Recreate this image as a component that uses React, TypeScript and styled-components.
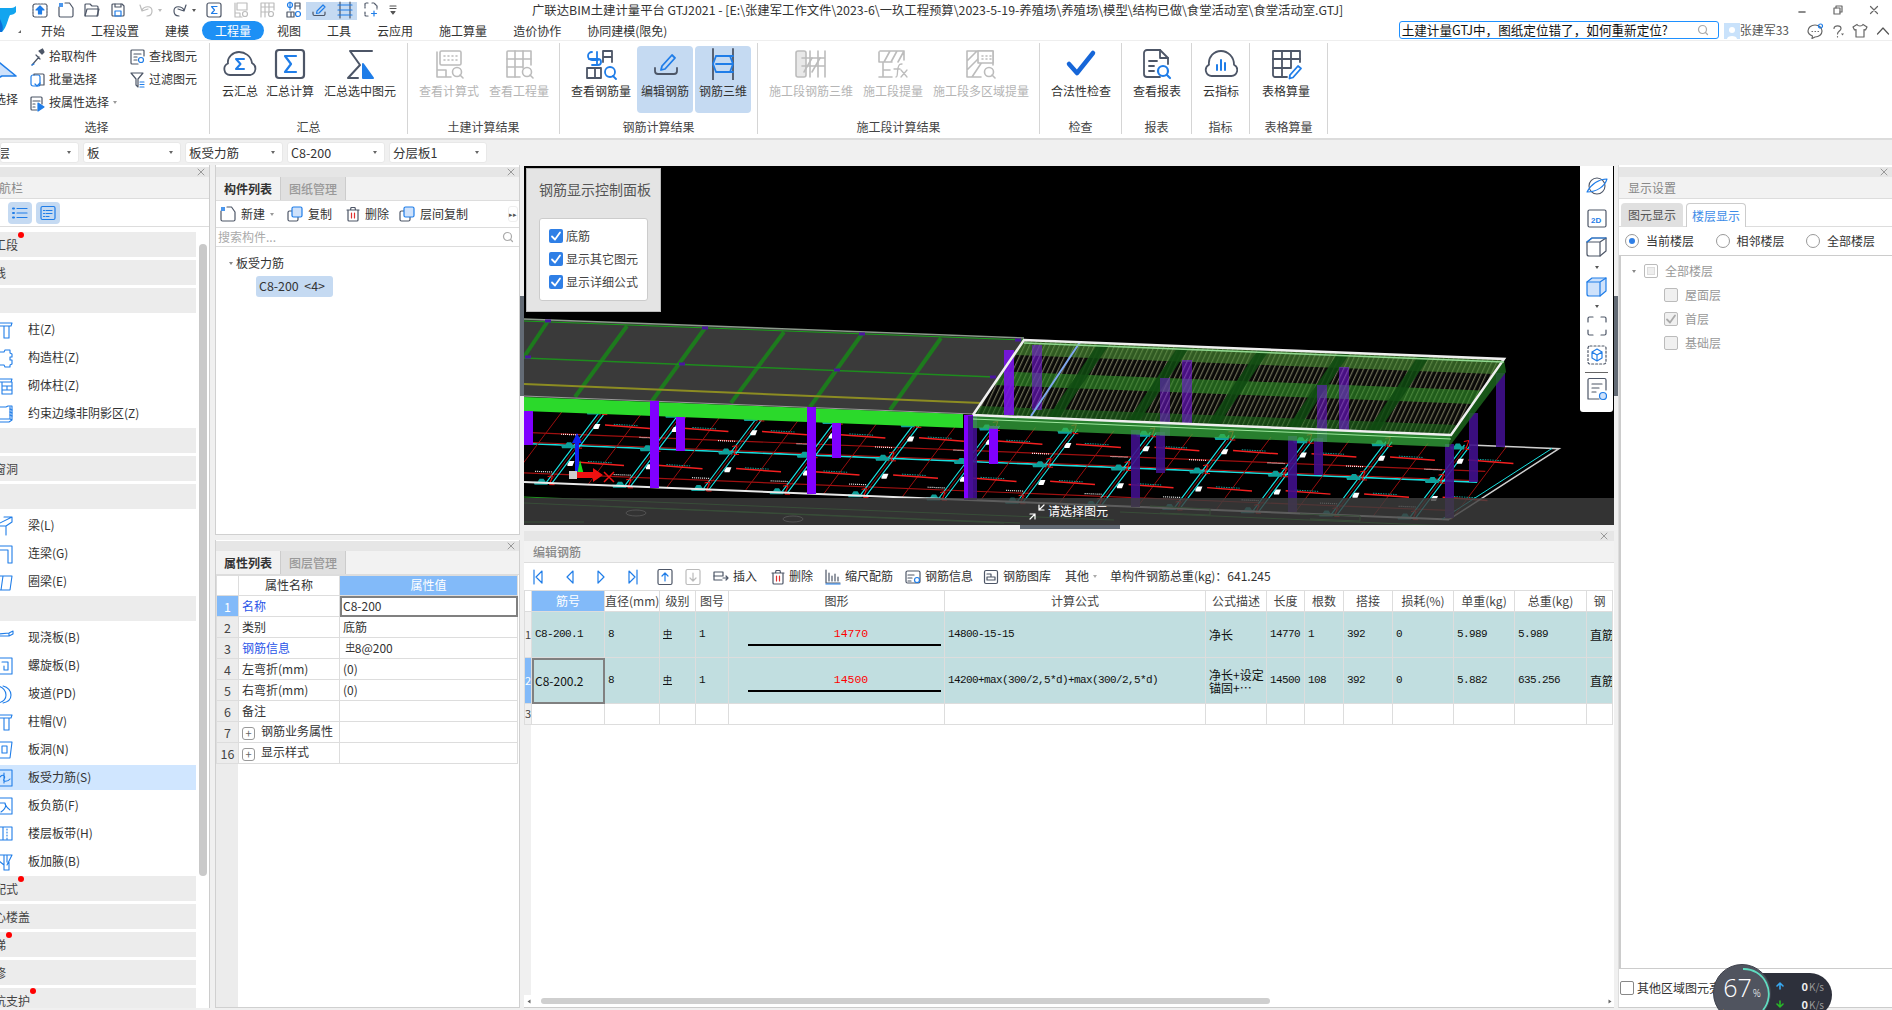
import React from "react";
import styled, { createGlobalStyle } from "styled-components";

const FONT = '"Noto Sans CJK SC", "Noto Sans", sans-serif';
const MONO = '"Liberation Mono", "Noto Sans CJK SC", monospace';
const D = "#4d5667";
const B = "#1f7de8";
const G = "#bcbcbc";

const Global = createGlobalStyle`
  html, body { margin: 0; padding: 0; background: #f0f0f0; overflow: hidden; }
  * { box-sizing: border-box; }
  #root { width: 1892px; height: 1010px; }
`;

const Page = styled.div`
  position: relative; width: 1892px; height: 1010px; overflow: hidden;
  display: flex; flex-direction: column;
  font: 12px/1.2 ${FONT}; color: #333; background: #f0f0f0;
`;

/* ---------- icon helper ---------- */
const Svg = styled.svg`display: block; flex: none;`;
const Ic: React.FC<{ w?: number; h?: number; vb?: string; c?: string; sw?: number; children?: React.ReactNode }> = ({ w = 18, h = 18, vb, c = D, sw = 1.2, children }) => (
  <Svg width={w} height={h} viewBox={vb ?? `0 0 ${w} ${h}`} fill="none" stroke={c} strokeWidth={sw} strokeLinecap="round" strokeLinejoin="round">{children}</Svg>
);

/* ---------- header ---------- */
const Header = styled.header`display: flex; height: 41px; background: #fff; border-bottom: 1px solid #eee;`;
const LogoCell = styled.div`width: 27px; height: 40px; flex: none;`;
const HeaderRows = styled.div`flex: 1; display: flex; flex-direction: column; min-width: 0;`;
const TitleRow = styled.div`height: 20px; display: flex; align-items: center; overflow: hidden;`;
const QuickBtn = styled.div<{ $w?: number; $on?: boolean }>`
  width: ${p => p.$w ?? 26}px; height: 20px; display: flex; align-items: center; justify-content: center; gap: 3px; flex: none;
  background: ${p => (p.$on ? "linear-gradient(#fff 2px,#c5daf2 2px)" : "transparent")};
`;
const Caret = styled.i<{ $c?: string }>`
  display: inline-block; width: 0; height: 0; flex: none;
  border-left: 2.5px solid transparent; border-right: 2.5px solid transparent; border-top: 3px solid ${p => p.$c ?? "#666"};
`;
const TitleText = styled.div`margin-left: 132px; font-size: 12.35px; color: #333; white-space: nowrap;`;
const WinBtns = styled.div`margin-left: auto; display: flex; gap: 0; padding-right: 0;`;
const WinBtn = styled.div`width: 36px; height: 20px; display: flex; align-items: center; justify-content: center;`;
const MenuRow = styled.nav`height: 20px; display: flex; align-items: flex-end; padding-left: 1px;`;
const MenuItem = styled.div<{ $on?: boolean }>`
  height: 19px; padding: 0 13px; line-height: 19px; white-space: nowrap; border-radius: 10px; flex: none;
  color: ${p => (p.$on ? "#fff" : "#333")}; background: ${p => (p.$on ? "#1d90f5" : "transparent")};
`;
const SearchBox = styled.div`
  margin-left: auto; width: 320px; height: 18px; border: 1px solid #1e90ff; border-radius: 3px; background: #fff;
  display: flex; align-items: center; justify-content: space-between; padding: 0 9px 0 2px; margin-bottom: 1px;
  font-size: 12.6px; color: #111; white-space: nowrap; flex: none;
`;
const UserBox = styled.div`display: flex; align-items: center; margin-left: 5px; height: 19px; color: #555; flex: none;`;
const Avatar = styled.div`width: 16px; height: 16px; background: #c9e2fb; display: flex; align-items: flex-end; justify-content: center;`;
const RightIcons = styled.div`display: flex; align-items: center; height: 19px; gap: 8px; margin-left: 18px; padding-right: 0; flex: none; width: 85px;`;

/* ---------- ribbon ---------- */
const Ribbon = styled.section`display: flex; height: 99px; background: #fff; padding: 2px 0 1px; border-bottom: 2px solid #dcdcdc;`;
const Group = styled.div<{ $w: number; $last?: boolean }>`
  width: ${p => p.$w}px; flex: none; display: flex; flex-direction: column;
  border-right: ${p => (p.$last ? "none" : "1px solid #d5d5d5")}; overflow: hidden; margin-bottom: 3px;
`;
const GroupBody = styled.div<{ $pl?: number }>`flex: 1; display: flex; gap: 0; padding: 3px 0 0 ${p => p.$pl ?? 0}px;`;
const GroupLabel = styled.div<{ $pr?: number }>`height: 15px; line-height: 16px; text-align: center; color: #444; padding-right: ${p => p.$pr ?? 0}px;`;
const Big = styled.div<{ $w: number; $on?: boolean; $off?: boolean }>`
  width: ${p => p.$w}px; flex: none; height: 67px; border-radius: 4px; display: flex; flex-direction: column; align-items: center;
  padding-top: 2px; gap: 4px; white-space: nowrap; margin-right: ${p => (p.$on ? 2 : 0)}px;
  background: ${p => (p.$on ? "#c5daf2" : "transparent")}; color: ${p => (p.$off ? "#b5b5b5" : "#333")};
`;
const IconSlot = styled.div`height: 32px; display: flex; align-items: center; justify-content: center;`;
const SelectBig = styled.div`width: 30px; flex: none; overflow: hidden; padding-top: 10px;`;
const SelectBigLabel = styled.div`margin: 8px 0 0 -6px; white-space: nowrap;`;
const SmallCol = styled.div<{ $w: number }>`width: ${p => p.$w}px; flex: none; display: flex; flex-direction: column; gap: 0; margin-top: -1px;`;
const SmallBtn = styled.div`height: 23px; display: flex; align-items: center; gap: 4px; white-space: nowrap;`;

/* ---------- selector row ---------- */
const SelectRow = styled.div`height: 25px; display: flex; gap: 4px; padding-top: 2px; background: #f0f0f0; flex: none;`;
const Select = styled.div<{ $first?: boolean }>`
  width: ${p => (p.$first ? 79 : 98)}px; height: 21px; background: #fff; border: 1px solid #e8e8e8; border-radius: 3px;
  display: flex; align-items: center; justify-content: space-between; padding: 0 7px 0 3px; font-size: 12.5px; overflow: hidden; flex: none;
`;
const SelectText = styled.span<{ $cut?: boolean }>`margin-left: ${p => (p.$cut ? -19 : 0)}px; white-space: nowrap;`;

/* ---------- panels ---------- */
const Main = styled.main`flex: 1; display: flex; min-height: 0; padding-bottom: 2px;`;
const Cap = styled.div<{ $top?: number }>`
  height: 10px; background: #e6e6e6; display: flex; align-items: center; justify-content: flex-end; padding-right: 4px; flex: none;
  margin-top: ${p => p.$top ?? 2}px;
`;
const CapTitle = styled.div`height: 22px; line-height: 22px; background: #f2f2f2; border-bottom: 1px solid #ddd; color: #888; flex: none; padding-left: 9px; white-space: nowrap; overflow: hidden;`;
const X: React.FC = () => (
  <Ic w={8} h={8} c="#999" sw={1}><path d="M1 1l6 6M7 1L1 7" /></Ic>
);

const LeftPanel = styled.aside`width: 210px; flex: none; display: flex; flex-direction: column; background: #fff; border-right: 1px solid #ccc; overflow: hidden;`;
const CutTitle = styled(CapTitle)`padding-left: 0; text-indent: -13px;`;
const NavTools = styled.div`height: 28px; display: flex; gap: 4px; padding: 3px 0 0 8px; border-bottom: 1px solid #ddd; flex: none;`;
const ToolToggle = styled.div`width: 24px; height: 22px; background: #c5daf2; border-radius: 4px; display: flex; align-items: center; justify-content: center;`;
const NavBody = styled.div`flex: 1; display: flex; min-height: 0; padding-top: 4px;`;
const NavList = styled.div`width: 196px; flex: none; overflow: hidden; display: flex; flex-direction: column;`;
const NavGroupRow = styled.div`
  height: 25px; margin: 1px 0 2px; background: #ececec; line-height: 26px; white-space: nowrap; padding-left: 0; flex: none;
  display: flex; color: #444;
`;
const NavGroupText = styled.span`margin-left: -18px; position: relative;`;
const RedDot = styled.i`position: absolute; right: -6px; top: 0; width: 6px; height: 6px; border-radius: 50%; background: #f00;`;
const NavItem = styled.div<{ $on?: boolean }>`
  height: 25px; margin: 2px 0 1px; display: flex; align-items: center; white-space: nowrap; gap: 14px; flex: none;
  background: ${p => (p.$on ? "#d0e6ff" : "transparent")};
`;
const ScrollTrack = styled.div`width: 8px; margin-left: 3px; padding-top: 13px; flex: none;`;
const ScrollThumb = styled.div`height: 632px; background: #c9c9c9; border-radius: 4px;`;

const MiddleCol = styled.div`width: 305px; margin-left: 5px; flex: none; display: flex; flex-direction: column; gap: 5px;`;
const SidePanel = styled.section<{ $h?: number }>`
  flex: ${p => (p.$h ? `0 0 ${p.$h}px` : "1")}; min-height: 0; display: flex; flex-direction: column; background: #fff;
  border: 1px solid #d0d0d0; border-top: none; overflow: hidden;
`;
const TabBar = styled.div`height: 24px; display: flex; background: #f2f2f2; border-bottom: 1px solid #ddd; flex: none;`;
const Tab = styled.div<{ $on?: boolean }>`
  width: 65px; text-align: center; line-height: 23px; font-weight: ${p => (p.$on ? 600 : 500)};
  background: ${p => (p.$on ? "#f2f2f2" : "#e0e0e0")}; color: ${p => (p.$on ? "#333" : "#999")};
  border-right: 1px solid #ccc;
`;
const PanelTools = styled.div`height: 27px; display: flex; align-items: center; border-bottom: 1px solid #ddd; flex: none; position: relative; padding-left: 4px; white-space: nowrap;`;
const ToolBtn = styled.div<{ $mr?: number }>`display: flex; align-items: center; gap: 5px; margin-right: ${p => p.$mr ?? 10}px; flex: none;`;
const MoreBtn = styled.div`margin-left: auto; width: 10px; height: 16px; margin-right: 1px; border-radius: 3px; background: #fff; border: 1px solid #eee; font-size: 7px; color: #555; text-align: center; line-height: 14px;`;
const SearchRow = styled.div`height: 19px; display: flex; align-items: center; justify-content: space-between; padding: 0 5px 0 2px; border-bottom: 1px solid #ddd; color: #aaa; flex: none;`;
const Tree = styled.div`padding: 8px 0 0 13px;`;
const TreeRoot = styled.div`display: flex; align-items: center; gap: 3px; height: 16px;`;
const TreeChip = styled.div`margin: 5px 0 0 27px; width: 77px; height: 21px; background: #c5daf2; border-radius: 3px; padding-left: 3px; line-height: 21px; white-space: nowrap; font-size: 12.4px;`;

const PropTable = styled.table`border-collapse: collapse; table-layout: fixed; width: 301px;`;
const PropArea = styled.div`flex: 1; background: linear-gradient(to right,#ececec 22px,#fff 22px); min-height: 0; overflow: hidden;`;
const PropHead = styled.th<{ $on?: boolean }>`
  height: 20px; font-weight: 400; font-size: 12px; padding: 0;
  border: 1px solid #ddd; background: ${p => (p.$on ? "#82baf9" : "#fff")}; color: ${p => (p.$on ? "#fff" : "#333")};
`;
const PropNo = styled.td<{ $on?: boolean }>`
  height: 21px; padding: 0; text-align: center; font-size: 12.5px; border: 1px solid #ddd;
  background: ${p => (p.$on ? "#82baf9" : "#ececec")}; color: ${p => (p.$on ? "#fff" : "#444")};
`;
const PropCell = styled.td<{ $link?: boolean; $edit?: boolean }>`
  height: 21px; padding: 0 3px; border: 1px solid #ddd; white-space: nowrap; overflow: hidden;
  color: ${p => (p.$link ? "#2a55e8" : "#333")};
  outline: ${p => (p.$edit ? "2px solid #808080" : "none")}; outline-offset: -2px;
`;
const Expand = styled.span`
  display: inline-flex; width: 13px; height: 13px; border: 1px solid #999; border-radius: 3px; margin-right: 6px;
  align-items: center; justify-content: center; font-size: 11px; line-height: 1; vertical-align: -2px; color: #666;
`;
const GradeMark = styled.span`font-size: 9px; font-family: "Liberation Serif", "Noto Sans CJK SC", serif; text-decoration: underline; vertical-align: 3px;`;

/* ---------- centre ---------- */
const CenterCol = styled.div`width: 1098px; flex: none; display: flex; flex-direction: column; gap: 2px; padding-top: 1px;`;
const ViewRow = styled.div`height: 363px; display: flex; flex: none;`;
const Strip = styled.div`width: 4px; flex: none; padding-top: 130px;`;
const StripHandle = styled.div`height: 100px; background: #636b75;`;
const Viewport = styled.div`position: relative; flex: 1; background: #000; overflow: hidden;`;
const ControlPanel = styled.div`
  position: absolute; left: 2px; top: 2px; width: 135px; height: 144px; background: #e4e4e4; border: 1px solid #bbb; padding: 11px 12px 0 12px;
`;
const ControlTitle = styled.div`font-size: 14px; color: #555; white-space: nowrap; line-height: 18px;`;
const ControlBox = styled.div`
  margin-top: 20px; background: #fff; border: 1px solid #ccc; border-radius: 3px; height: 83px; padding: 10px 0 0 9px;
  display: flex; flex-direction: column; gap: 9px;
`;
const ControlRow = styled.div`display: flex; align-items: center; gap: 3px; height: 14px; white-space: nowrap; color: #444;`;
const BlueCheck = styled.span`width: 14px; height: 14px; background: #2f7fe6; border-radius: 2px; display: flex; align-items: center; justify-content: center;`;
const StatusBar = styled.div`
  position: absolute; left: 0; right: 0; bottom: 4px; height: 27px; background: rgba(62,62,62,.82);
  display: flex; align-items: center; color: #fff; padding-left: 505px; gap: 3px;
`;
const BottomHandle = styled.div`position: absolute; left: 496px; width: 100px; bottom: 0; height: 4px; background: #636b75;`;
const BottomWhite = styled.div`position: absolute; left: 0; right: 0; bottom: 0; height: 4px; background: #f0f0f0;`;
const ViewTools = styled.div`
  position: absolute; right: 1px; top: 0; width: 33px; height: 246px; background: #fff; border-radius: 0 0 3px 3px;
  display: flex; flex-direction: column; align-items: center; padding-top: 10px;
`;
const ViewToolGap = styled.div<{ $h: number }>`height: ${p => p.$h}px; flex: none;`;
const ViewToolLine = styled.div`width: 23px; height: 1px; background: #666; flex: none; margin: 7px 0 4px;`;

const EditPanel = styled.section`flex: 1; margin: 0 4px; min-height: 0; display: flex; flex-direction: column; background: #fff; overflow: hidden; border-bottom: 1px solid #ccc;`;
const EditCap = styled(Cap)`padding-right: 6px;`;
const EditTitle = styled(CapTitle)`font-weight: 500; height: 22px;`;
const EditTools = styled.div`height: 27px; display: flex; align-items: center; white-space: nowrap; flex: none;`;
const NavArrows = styled.div`display: flex; align-items: center; padding-left: 8px; width: 133px; flex: none; gap: 0;`;
const ArrowCell = styled.div`width: 31.7px; flex: none;`;
const BoxBtn = styled.div<{ $w?: number }>`width: ${p => p.$w ?? 28}px; flex: none;`;
const EditTool = styled.div<{ $w: number }>`width: ${p => p.$w}px; display: flex; align-items: center; gap: 4px; flex: none;`;
const GridArea = styled.div`flex: 1; min-height: 0; background: linear-gradient(to right,#f0f0f0 7px,#fff 7px); overflow: hidden;`;
const Grid = styled.table`border-collapse: collapse; table-layout: fixed; width: 1088px;`;
const GH = styled.th<{ $on?: boolean }>`
  height: 21px; padding: 0; font-weight: 400; border: 1px solid #ddd; border-top: 1px solid #ddd; white-space: nowrap; overflow: hidden;
  background: ${p => (p.$on ? "#82baf9" : "#fff")}; color: ${p => (p.$on ? "#fff" : "#444")}; font-size: 12px;
`;
const GNo = styled.td<{ $on?: boolean }>`
  padding: 0; font-size: 11px; text-align: center; border: 1px solid #ddd; overflow: hidden;
  background: ${p => (p.$on ? "#82baf9" : "#f0f0f0")}; color: ${p => (p.$on ? "#fff" : "#444")};
`;
const GC = styled.td<{ $row?: boolean; $mono?: boolean; $h?: number; $sel?: boolean }>`
  height: ${p => p.$h ?? 46}px; padding: 0 2px 0 3px; border: 1px solid #ddd; white-space: nowrap; overflow: hidden;
  background: ${p => (p.$row ? "#c1dee0" : "#fff")}; color: #111; line-height: 13px;
  font-family: ${p => (p.$mono ? MONO : FONT)}; font-size: ${p => (p.$mono ? "11px" : "12px")}; letter-spacing: ${p => (p.$mono ? "-0.6px" : "0")};
  outline: ${p => (p.$sel ? "2px solid #808080" : "none")}; outline-offset: -2px;
`;
const ShapeCell = styled.div`display: flex; flex-direction: column; align-items: center; margin-top: 5px; padding-left: 14px;`;
const ShapeNum = styled.span`color: #f00; font: 11.5px/12px ${MONO}; margin-left: 14px;`;
const ShapeLine = styled.i`display: block; width: 193px; height: 2px; background: #000; margin-top: 4px;`;
const HBar = styled.div`height: 12px; display: flex; align-items: center; padding: 0 2px 0 3px; gap: 2px; flex: none;`;
const HTrack = styled.div`flex: 1; height: 6px;`;
const HThumb = styled.div`width: 729px; height: 6px; margin-left: 8px; background: #cfcfcf; border-radius: 3px;`;
const ArrowLeft = styled(Caret)`transform: rotate(90deg);`;
const ArrowRight = styled(Caret)`transform: rotate(-90deg);`;

/* ---------- right panel ---------- */
const RightPanel = styled.aside`flex: 1; min-width: 0; display: flex; flex-direction: column; background: #fff; border-bottom: 1px solid #ccc; border-left: 1px solid #ddd; overflow: hidden;`;
const DisplayTabs = styled.div`height: 28px; display: flex; gap: 3px; padding: 4px 0 0 2px; border-bottom: 1px solid #ddd; flex: none;`;
const DTab = styled.div<{ $on?: boolean }>`
  width: ${p => (p.$on ? 60 : 62)}px; height: 24px; border-radius: 4px 4px 0 0; text-align: center; line-height: 24px;
  background: ${p => (p.$on ? "#fff" : "#e0e0e0")}; color: ${p => (p.$on ? "#3d8ce8" : "#555")};
  border: ${p => (p.$on ? "1px solid #ccc" : "none")}; border-bottom: none; font-size: 12px;
`;
const RadioRow = styled.div`height: 29px; display: flex; align-items: center; padding-left: 6px; flex: none; border-bottom: 1px solid #ccc;`;
const RadioItem = styled.div`width: 90.5px; display: flex; align-items: center; gap: 7px; flex: none; white-space: nowrap;`;
const Radio = styled.span`
  width: 14px; height: 14px; border: 1px solid #999; border-radius: 50%; background: #fff; display: flex; align-items: center; justify-content: center;
`;
const RadioDot = styled.i`width: 6px; height: 6px; background: #2f7fe6; border-radius: 50%;`;
const FloorBox = styled.div`flex: 1; border-left: 2px solid #ccc; border-bottom: 1px solid #ccc; padding: 3px 0 0 8px; color: #999; min-height: 0;`;
const FloorRow = styled.div<{ $indent?: boolean }>`height: 24px; display: flex; align-items: center; gap: 7px; padding-left: ${p => (p.$indent ? 35 : 0)}px; white-space: nowrap;`;
const FloorCheck = styled.span<{ $partial?: boolean }>`
  width: 14px; height: 14px; border: 1px solid #bbb; border-radius: 2px; background: ${p => (p.$partial ? "#fff" : "#f0f0f0")};
  display: flex; align-items: center; justify-content: center; flex: none;
`;
const FloorInner = styled.i`width: 8px; height: 8px; background: #eee; border: 1px solid #ddd;`;
const TreeCaret = styled.span`margin: 0 1px 0 3px; display: flex;`;
const FootRow = styled.div`height: 38px; display: flex; align-items: center; gap: 3px; padding: 0 0 0 1px; flex: none; white-space: nowrap;`;
const PlainCheck = styled.span`width: 14px; height: 14px; border: 1px solid #888; border-radius: 2px; background: #fff; flex: none;`;

/* ---------- net widget ---------- */
const Net = styled.div`position: absolute; left: 1713px; top: 963px; width: 119px; height: 60px;`;
const NetPill = styled.div`
  position: absolute; left: 28px; top: 10px; right: 0; height: 44px; border-radius: 22px; background: #2d303b; color: #ddd;
  display: flex; flex-direction: column; justify-content: center; gap: 4px; padding: 0 8px 0 35px; font-size: 10px;
`;
const NetRow = styled.div`display: flex; align-items: center; justify-content: space-between; height: 14px; line-height: 14px;`;
const NetVal = styled.span`color: #999; b { color: #eee; font-size: 11px; font-weight: 600; margin-right: 1px; }`;
const NetCircle = styled.div`
  position: absolute; left: 0; top: 1px; width: 58px; height: 58px; border-radius: 50%; background: #50545f; border: 1px solid #3f424d;
  display: flex; align-items: center; justify-content: center; color: #fff; font: 300 25px/1 "Open Sans", "Noto Sans", sans-serif; padding-bottom: 12px;
`;
const NetPct = styled.span`font-size: 10px; margin: 11px 0 0 1px;`;
const NetRing = styled.svg`position: absolute; left: -1px; top: -1px;`;

/* ---------- icons ---------- */
const CopyGlyph: React.FC = () => (
  <Ic w={16} h={16} c={D}>
    <path d="M5 5H2.5A1.5 1.5 0 0 0 1 6.500v7A1.500 1.500 0 0 0 2.500 15h7A1.500 1.500 0 0 0 11 13.500V11" />
    <rect x="5" y="1" width="10" height="10" rx="1.500" fill="#cfe2fb" stroke={B} />
  </Ic>
);
const NewDoc = () => (
  <Ic w={16} h={16}>
    <path d="M1 5v8.500A1.500 1.500 0 0 0 2.500 15h11a1.500 1.500 0 0 0 1.500-1.500V6l-3.500-5H7" />
    <rect x="1" y="1" width="4" height="4" fill={B} stroke="none" opacity=".8" />
  </Ic>
);
const Trash = () => (
  <Ic w={14} h={16}>
    <path d="M1 4h12M4.500 4l.5-2.500h4L9.500 4M2 4v10a1 1 0 0 0 1 1h8a1 1 0 0 0 1-1V4" />
    <path d="M5.500 7v5M8.500 7v5" stroke="#e03030" />
  </Ic>
);
const Mag: React.FC<{ c?: string; s?: number }> = ({ c = "#aaa", s = 12 }) => (
  <Ic w={s} h={s} vb="0 0 12 12" c={c}><circle cx="5.500" cy="5.500" r="4" /><path d="M8.500 8.500l2 2" /></Ic>
);

const CloudSigma = () => (
  <Ic w={36} h={32} sw={1.800}>
    <path d="M8 27a6 6 0 0 1-2-11.500C5 9 11 4 17 4s12 4 13 11a6.500 6.500 0 0 1-1.500 12Z" />
    <path d="M22 11h-8l4.500 5-4.500 5h8" stroke={B} strokeWidth={2} />
  </Ic>
);
const BoxSigma = () => (
  <Ic w={32} h={32} sw={2.200}>
    <rect x="2" y="2" width="28" height="28" rx="3" />
    <path d="M22 8H11l6 8-6 8h11" stroke={B} strokeWidth={2.200} />
  </Ic>
);
const SelSigma = () => (
  <Ic w={32} h={32} sw={2}>
    <path d="M28 3H6l10 14L4 30h10" />
    <path d="M19 16l10 14H19Z" fill={B} stroke={B} />
  </Ic>
);
const GrayCalc = () => (
  <Ic w={34} h={32} c={G} sw={1.600}>
    <path d="M5 4v25h14M5 22h9v7" />
    <rect x="8" y="3" width="21" height="14" rx="1.500" />
    <path d="M12 8h1M16 8h1M20 8h1M24 8h1M12 12h1M16 12h1M20 12h1M24 12h1" />
    <circle cx="25" cy="24" r="4.500" /><path d="M28 27l3 3" />
  </Ic>
);
const GrayTable = () => (
  <Ic w={34} h={32} c={G} sw={1.600}>
    <path d="M18 29H5V4a1 1 0 0 1 1-1h23v14" />
    <path d="M5 11h24M5 19h16M13 3v26M21 3v17" />
    <circle cx="25" cy="24" r="4.500" /><path d="M28 27l3 3" />
  </Ic>
);
const RebarQty = () => (
  <Ic w={34} h={32} sw={1.800}>
    <path d="M8 4a4 4 0 1 0 0 8h6M13 4v12" stroke={B} /><path d="M5 11h9a3 3 0 0 1 0 6H8" stroke={B} />
    <path d="M19 14V3h9v11M19 9h9" />
    <path d="M3 30V20h14v10H3M11 20v10" />
    <circle cx="26" cy="24" r="5" stroke={B} /><path d="M29 28l3 3" stroke={B} />
  </Ic>
);
const EditRebar = () => (
  <Ic w={30} h={30} sw={1.800}>
    <path d="M5 19v3a3 3 0 0 0 3 3h16a3 3 0 0 0 3-3v-3" />
    <path d="M12 17l10-11 3 3-10 11-4 1Z" stroke={B} />
  </Ic>
);
const Rebar3D = () => (
  <Ic w={30} h={32} sw={1.800}>
    <path d="M5 1v31M25 1v31" />
    <path d="M8 8h17M8 16h17M8 24h17M8 8L5 16l3 8M22 8l3 8-3 8" stroke={B} />
  </Ic>
);
const GrayRebar3D = () => (
  <Ic w={34} h={32} c={G} sw={1.600}>
    <rect x="2" y="3" width="10" height="26" rx="2" fill="#e8e8e8" />
    <path d="M8 10h23M8 18h23M16 3v26M24 3v26M31 3v26" />
    <path d="M10 24l8-14M18 24l8-14" />
  </Ic>
);
const GrayFx = () => (
  <Ic w={34} h={32} c={G} sw={1.600}>
    <path d="M4 3h24v9M3 14V4M8 14L14 3M15 14l6-11M22 14l6-11M4 14h12M7 14v15M7 22h7M3 29h13" />
    <path d="M20 29c2 0 1-5 2-9s2-4 4-4M18 21h6M25 22l6 7M31 22l-6 7" strokeWidth={1.300} />
  </Ic>
);
const GrayMulti = () => (
  <Ic w={34} h={32} c={G} sw={1.600}>
    <path d="M3 29V3h26v14M3 13L13 3M3 22L19 6M8 29l10-15M3 29h14" />
    <rect x="14" y="3" width="15" height="12" fill="#fff" />
    <path d="M18 8h1M22 8h1M26 8h1M18 11h1M22 11h1M26 11h1" />
    <circle cx="25" cy="24" r="4.500" /><path d="M28 27l3 3" />
  </Ic>
);
const CheckBig = () => (
  <Ic w={32} h={32} c="#1666d8" sw={4.500}><path d="M4 16l8 9L28 5" /></Ic>
);
const Report = () => (
  <Ic w={34} h={32} sw={1.800}>
    <path d="M20 29H7a3 3 0 0 1-3-3V5a3 3 0 0 1 3-3h13l8 8v6" /><path d="M20 2v8h8" />
    <path d="M9 13h8M9 18h5M9 23h5" />
    <circle cx="23" cy="23" r="5" stroke={B} strokeWidth={2.200} /><path d="M27 27l3 3" stroke={B} strokeWidth={2.200} />
  </Ic>
);
const CloudIdx = () => (
  <Ic w={34} h={32} sw={1.800}>
    <path d="M8 28a6 6 0 0 1-3-11.300C4 9 10 3 17 3s13 6 13 13.700A6 6 0 0 1 27 28Z" />
    <path d="M13 17v5M17 12v10M21 15v7" stroke={B} strokeWidth={2} />
  </Ic>
);
const TableEdit = () => (
  <Ic w={34} h={32} sw={1.800}>
    <path d="M18 29H6a2 2 0 0 1-2-2V3h27v11" /><path d="M4 11h27M4 20h17M13 3v26M22 3v17" />
    <path d="M21 27l8-9 3 2.500-8 9-3.500 1Z" stroke={B} />
  </Ic>
);

const Cube: React.FC<{ filled?: boolean }> = ({ filled }) => (
  <Ic w={21} h={21} c={filled ? B : D} sw={1.200}>
    <path d="M1 6v12a2 2 0 0 0 2 2h11l6-5V2H6Z" fill={filled ? "#cfe2fb" : "none"} stroke={filled ? B : D} />
    <path d="M1 6h13v14M14 6l6-4" />
    {!filled && <path d="M1 6l5-4h14" stroke={B} />}
  </Ic>
);

/* ---------- nav icons: their left part is scrolled out of the panel ---------- */
const navIcons: Record<string, React.ReactNode> = {
  col: <path d="M-2 3h14M12 3l-1 3H-2M4 6v12h5V6" />,
  gz: <path d="M0 4h4l1-2h5v3l2 1v3h-2v3h2v4l-2 1v2H5l-1-2H0" />,
  qt: <path d="M-2 3h14M12 3l-1 3H-2M2 6v12h10V6M2 10h10M2 14h10M7 10v4" />,
  yb: <><path d="M-1 3h7l2-1h4v14l-3 2H-1M-1 15h11v-12M10 15l2 1" /><path d="M10 5l2 1M10 8l2 1M10 11l2 1" /></>,
  beam: <path d="M-2 8L12 1v5L6 10v9M6 10H-2M12 1H4" />,
  lian: <path d="M-2 2h14v17h-4V6H-2" />,
  quan: <path d="M-1 4h13l-2 14H-3M3 4L1 18" />,
  ban: <path d="M-1 6l10-1 4-2v3l-4 2H-1M9 5v3" />,
  luo: <><path d="M-1 2h13v16H-1" /><path d="M2 6h6v8H4v-4" /></>,
  po: <path d="M-2 2c5 1 8 5 8 9s-3 7-8 8M3 2c5 1 8 5 8 9s-3 7-8 8" />,
  mao: <path d="M-2 3h14M12 3l-1 3H-2M4 6v12h5V6" />,
  dong: <><path d="M-1 2h13l-2 16H-3Z" /><rect x="2" y="6" width="5" height="7" /></>,
  sl: <><path d="M-1 2h13v16H-1" /><path d="M-1 10c4-5 7-2 5 1-2 3 4 3 6 0M4 5v10" /></>,
  fj: <><path d="M-1 2h13v16H-1" /><path d="M0 7h5c2 4-1 7-4 9M5 8c1 2 3 5 5 6" /></>,
  ld: <path d="M-1 3h13v13H-1M3 3v13M7 5v1M7 8v1M7 11v1M7 14v1" />,
  jy: <path d="M-2 3h14M12 3L7 13M4 3v15h5v-8M-2 8l6 5M7 3v7" />,
};
const NavIcon: React.FC<{ k: string }> = ({ k }) => (
  <Ic w={14} h={20} vb="0 0 14 20" c={B} sw={1.100}>{navIcons[k]}</Ic>
);

const Item: React.FC<{ k: string; t: string; on?: boolean }> = ({ k, t, on }) => (
  <NavItem $on={on}><NavIcon k={k} /><span>{t}</span></NavItem>
);
const GroupRow: React.FC<{ t: string; dot?: boolean }> = ({ t, dot }) => (
  <NavGroupRow><NavGroupText>{t}{dot && <RedDot />}</NavGroupText></NavGroupRow>
);

/* ---------- 3D scene ---------- */
const flp = (u: number, v: number): [number, number] => [524 + u + 55 * v, 482 + 0.0405 * u - 73 * v];
const fl = (u: number, v: number) => flp(u, v).join(",");
const sl = (a: number, b: number) => `${1024 + 480 * a - 51 * b},${340 + 19 * a + 75 * b}`;
const slabQuad = (a0: number, a1: number, b0: number, b1: number) => `${sl(a0, b0)} ${sl(a1, b0)} ${sl(a1, b1)} ${sl(a0, b1)}`;

const Scene: React.FC = () => {
  const diag: React.ReactNode[] = [];
  for (let k = -1; k < 12; k++) {
    const u = 22 + 78.5 * k;
    diag.push(<polyline key={"c" + k} points={`${fl(u, 0)} ${fl(u, 1)}`} stroke="#18e8e8" strokeWidth={1.100} />);
    diag.push(<polyline key={"d" + k} points={`${fl(u + 6, 0)} ${fl(u + 6, 1)}`} stroke="#18e8e8" strokeWidth={1.100} />);
    diag.push(<polyline key={"r" + k} points={`${fl(u + 42, 0)} ${fl(u + 42, 1)}`} stroke="#9a0e0e" strokeWidth={1} />);
    diag.push(<polyline key={"e" + k} points={`${fl(u + 3, 0)} ${fl(u + 3, 1)}`} stroke="#b01010" strokeWidth={.8} />);
  }
  const rows: React.ReactNode[] = [];
  for (const [v, c, w] of [[.12, "#a01010", 1.200], [.66, "#a01010", 1.200], [.512, "#18e0e0", 1.600], [.53, "#b01010", 1]] as [number, string, number][]) {
    rows.push(<polyline key={"h" + v} points={`${fl(-30, v)} ${fl(925, v)}`} stroke={c} strokeWidth={w} />);
  }
  const marks: React.ReactNode[] = [];
  for (let k = -6; k < 6; k++) {
    for (const [du, v] of [[498, .77], [500, .263]] as [number, number][]) {
      const u = du + 78.5 * k;
      const [x, y] = flp(u, v);
      if (u > 905) continue;
      marks.push(<path key={`w${k}${v}`} d={`M${x} ${y}l2-3h5l-2 5h-5Z`} fill="#fff" />);
      marks.push(<polyline key={`s${k}${v}`} points={`${fl(u + 10, v + .03)} ${fl(u + 56, v + .01)}`} stroke="#f42020" strokeWidth={1.500} />);
      marks.push(<polyline key={`t${k}${v}`} points={`${fl(u - 26, v - .115)} ${fl(u - 8, v - .115)}`} stroke="#f4f4f4" strokeWidth={1.200} strokeDasharray="1 1" />);
      marks.push(<polyline key={`g${k}${v}`} points={`${fl(u + 18, v + .045)} ${fl(u + 42, v + .04)}`} stroke="#0ea09a" strokeWidth={1} strokeDasharray="1.500 1" />);
    }
    for (const v of [.51, .01, .97]) {
      const u = 480 + 78.5 * k;
      if (u > 915) continue;
      const [x, y] = flp(u, v);
      marks.push(<path key={`b${k}${v}`} d={`M${x} ${y}h4l2-3h4l2 3h3l-1 3h-13Z`} fill="#0ea09a" />);
      marks.push(<path key={`q${k}${v}`} d={`M${x + 14} ${y - 5}l5-1-3 9h5`} stroke="#f01010" fill="none" strokeWidth={1} />);
    }
  }
  const solidCols = [[650, 401, 488], [807, 407, 494], [964, 415, 500], [676, 417, 451], [832, 423, 458], [989, 426, 464], [524, 411, 445]];
  const farCols = [[1131, 430, 507], [1156, 432, 473], [1288, 436, 512], [1314, 438, 475], [1445, 444, 518], [1469, 413, 482], [1496, 373, 447], [968, 416, 500]];
  const roofCols = [[1004, 350, 415, .9], [1032, 345, 410, .55], [1182, 360, 423, .55], [1160, 378, 436, .5], [1339, 367, 430, .55], [1317, 385, 442, .5]];
  const greenBars = [[548, 321, 524, 357], [627, 326, 575, 397], [705, 328, 652, 401], [784, 332, 731, 403], [862, 334, 810, 407], [941, 338, 890, 410]];
  const nodes = [[548, 321], [705, 328], [862, 334], [1018, 340], [528, 357], [682, 364], [837, 370], [993, 377]];
  return (
    <Svg width={1090} height={363} viewBox="524 166 1090 363">
      <defs>
        <pattern id="hatch" width="5" height="5" patternUnits="userSpaceOnUse" patternTransform="skewX(-25)">
          <rect width="5" height="5" fill="#0a0a08" />
          <rect width="1.300" height="5" fill="#6f6f58" />
        </pattern>
      </defs>
      {rows}{diag}{marks}
      <polyline points={`${fl(0, 0)} ${fl(925, 0)}`} stroke="#e8e8e8" strokeWidth={2} />
      <polyline points={`${fl(925, 0)} ${fl(980, 1)} ${fl(890, 1)}`} stroke="#cfcfcf" strokeWidth={1.500} fill="none" />
      <polyline points={`${fl(918, 0)} ${fl(973, 1)}`} stroke="#18e0e0" strokeWidth={1} />
      {/* drawings below the front edge */}
      <path d="M524 497l590 23M524 503l480 20M600 506l420 17M524 522h60" stroke="#1f8f1f" strokeWidth={1} fill="none" />
      <path d="M1120 512l330 14M1150 506l60 3 0 6-50-2M1300 514l60 2 0 5-50-2" stroke="#1f8f1f" strokeWidth={1} fill="none" />
      <ellipse cx="636" cy="513" rx="10" ry="3" stroke="#aaa" fill="none" />
      <ellipse cx="793" cy="519" rx="10" ry="3" stroke="#aaa" fill="none" />
      {/* solid part of the roof */}
      <polygon points="524,319 1024,339 973,414 524,397" fill="#3a3a3a" />
      {greenBars.map(([a, b, c, d], i) => <line key={i} x1={a} y1={b} x2={c} y2={d} stroke="#1d7a1d" strokeWidth={4} />)}
      <line x1="524" y1="358" x2="994" y2="377" stroke="#1e8c1e" strokeWidth={1.500} />
      <line x1="524" y1="319" x2="1024" y2="338" stroke="#8c9a8c" strokeWidth={1.500} />
      <line x1="524" y1="321" x2="1024" y2="340" stroke="#1aa01a" strokeWidth={1} />
      {nodes.map(([x, y], i) => <rect key={i} x={x - 3} y={y - 1.500} width={6} height={3} fill="#4a16a0" />)}
      <line x1="524" y1="384" x2="1459" y2="423" stroke="#8c8c22" strokeWidth={2} />
      <polygon points="524,397 963,414 963,428 524,411" fill="#2bd92b" />
      <line x1="524" y1="396" x2="973" y2="414" stroke="#9a9a9a" strokeWidth={1} />
      {solidCols.map(([x, a, b], i) => <rect key={i} x={x} y={a} width={9} height={b - a} fill="#8000ff" />)}
      {farCols.map(([x, a, b], i) => <rect key={i} x={x} y={a} width={9} height={b - a} fill="#40108c" opacity=".9" />)}
      {/* glass part of the roof */}
      <polygon points={slabQuad(0, 1, 0, 1)} fill="url(#hatch)" />
      <polygon points={slabQuad(0, 1, 0, .2)} fill="#4a8f34" opacity=".6" />
      <polygon points={slabQuad(0, 1, .42, .6)} fill="#2f8f26" opacity=".62" />
      <polygon points={slabQuad(0, 1, .88, 1)} fill="#1c6a1a" opacity=".6" />
      {[0.167, .334, .5, .667, .834].map(a => <polygon key={a} points={slabQuad(a - .012, a + .012, 0, 1)} fill="#0e4a10" opacity=".85" />)}
      {roofCols.map(([x, a, b, o], i) => <rect key={i} x={x} y={a} width={10} height={b - a} fill="#7a14e8" opacity={o} />)}
      <polygon points="973,415 1451,435 1449,447 973,428" fill="#37b040" opacity=".72" />
      <polygon points="1504,359 1451,435 1449,447 1506,372" fill="#1d6a1d" opacity=".8" />
      <line x1="1080" y1="342" x2="1031" y2="416" stroke="#7fa8f0" strokeWidth={2} />
      <polyline points="973,415 1024,340 1504,359 1451,435 973,415" stroke="#f0f0f0" strokeWidth={2.500} fill="none" />
      <line x1="1024" y1="343" x2="1504" y2="362" stroke="#8fd88f" strokeWidth={1.500} />
      <line x1="973" y1="419" x2="1451" y2="439" stroke="#9fe89f" strokeWidth={1} />
      {/* axis */}
      <path d="M572 443l5-10 5 10h-3v30h-4v-30Z" fill="#1020f0" />
      <path d="M577 475l3-15 4 15Z" fill="#18e018" />
      <path d="M577 472h16v-4l10 7-10 7v-4h-16Z" fill="#f01010" />
      <rect x="569" y="471" width="8" height="8" fill="#ccc" />
      <path d="M604 472l10 10M614 472l-10 10" stroke="#f01010" strokeWidth={1.500} />
    </Svg>
  );
};

const Tick: React.FC<{ c?: string }> = ({ c = "#fff" }) => (
  <Ic w={12} h={12} c={c} sw={1.800}><path d="M2 6.500l3 3 5-7" /></Ic>
);

const rebarCols = [7, 73, 55, 36, 33, 216, 261, 61, 38, 39, 49, 61, 61, 72, 26];
const rebarHead = ["筋号", "直径(mm)", "级别", "图号", "图形", "计算公式", "公式描述", "长度", "根数", "搭接", "损耗(%)", "单重(kg)", "总重(kg)", "钢"];

const EIco: React.FC<{ children: React.ReactNode; c?: string }> = ({ children, c }) => <Ic w={16} h={16} c={c}>{children}</Ic>;

export default function App() {
  return (
    <Page>
      <Global />
      <Header>
        <LogoCell>
          <Ic w={27} h={40} c="none">
            <path d="M0 8h11c3 0 5-2 5-2v6c-1 2-4 3-6 3-2 3-3 12-8 17H0Z" fill="#12a5ef" stroke="none" />
            <path d="M0 19c2 5 4 8 2 13H0Z" fill="#0b6fd8" stroke="none" />
            <path d="M21 30v3h-3Z" fill="#666" stroke="none" />
          </Ic>
        </LogoCell>
        <HeaderRows>
          <TitleRow>
            <QuickBtn><Ic w={16} h={16}><rect x="1" y="2" width="14" height="13" rx="2" strokeDasharray="2 1" /><path d="M8 4l4 4h-2.500v4h-3V8H4Z" fill={B} stroke={B} /></Ic></QuickBtn>
            <QuickBtn><NewDoc /></QuickBtn>
            <QuickBtn><Ic w={16} h={16}><path d="M1 13V3a1 1 0 0 1 1-1h4l2 2h5a1 1 0 0 1 1 1v8a1 1 0 0 1-1 1H2a1 1 0 0 1-1-1Z" /><path d="M1 14l2-7h12l-2 7" /></Ic></QuickBtn>
            <QuickBtn><Ic w={16} h={16}><path d="M2 3a1 1 0 0 1 1-1h9l2 2v9a1 1 0 0 1-1 1H3a1 1 0 0 1-1-1Z" /><rect x="5" y="9" width="6" height="5" stroke={B} /><path d="M5 2v3h6V2" /></Ic></QuickBtn>
            <QuickBtn $w={36}><Ic w={18} h={16} c={G}><path d="M5 8c2-4 10-5 10 1 0 3-2 5-5 5M3 3l2 6 6-2" /></Ic><Caret $c="#bbb" /></QuickBtn>
            <QuickBtn $w={33}><Ic w={18} h={16}><path d="M13 8c-2-4-10-5-10 1 0 3 2 5 5 5M15 3l-2 6-6-2" /></Ic><Caret $c="#555" /></QuickBtn>
            <QuickBtn $w={28}><Ic w={16} h={16}><rect x="1" y="1" width="14" height="14" rx="2" /><path d="M11 4.500H5.500L8.500 8l-3 3.500H11" stroke={B} /></Ic></QuickBtn>
            <QuickBtn><Ic w={16} h={16} c={G}><path d="M2 1v14h7M2 11h5v4" /><rect x="4" y="1" width="10" height="7" /><circle cx="12" cy="12" r="2.500" /></Ic></QuickBtn>
            <QuickBtn><Ic w={16} h={16} c={G}><path d="M2 15V1h13v7M2 5h13M2 10h7M6 1v14M10 1v9" /><circle cx="12" cy="12" r="2.500" /></Ic></QuickBtn>
            <QuickBtn><Ic w={16} h={18}><circle cx="5" cy="4" r="2.500" stroke={B} /><path d="M5 1v8" stroke={B} /><path d="M10 8V2h5v6M10 5h5M2 16v-5h7v5H2M6 11v5" /><circle cx="13" cy="13" r="2.500" stroke={B} /></Ic></QuickBtn>
            <QuickBtn $on><Ic w={16} h={16} c={D}><path d="M2 10v2a1.500 1.500 0 0 0 1.500 1.500h9A1.500 1.500 0 0 0 14 12v-2" /><path d="M6 9l6-6 2 2-6 6-2.500.5Z" stroke={B} /></Ic></QuickBtn>
            <QuickBtn $on $w={25}><Ic w={16} h={18}><path d="M3 1v16M13 1v16" /><path d="M1 4h14M1 9h14M1 14h14" stroke={B} /></Ic></QuickBtn>
            <QuickBtn $w={28}><Ic w={16} h={18}><path d="M5 2H3a1 1 0 0 0-1 1v4M2 11v3a1 1 0 0 0 1 1h2M9 2h2l3 3v3" strokeDasharray="2 1" /><path d="M11 10v5M8.500 12.500h5" stroke={B} /></Ic></QuickBtn>
            <QuickBtn $w={15}><Ic w={8} h={10} c="#555"><path d="M1 1h6M1 3.500h6" /><path d="M2 6.500h4L4 9Z" fill="#555" /></Ic></QuickBtn>
            <TitleText>广联达BIM土建计量平台 GTJ2021 - [E:\张建军工作文件\2023-6\一玖工程预算\2023-5-19-养殖场\养殖场\模型\结构已做\食堂活动室\食堂活动室.GTJ]</TitleText>
            <WinBtns>
              <WinBtn><Ic w={8} h={8} c="#666" sw={1.600}><path d="M1 6h6" /></Ic></WinBtn>
              <WinBtn><Ic w={10} h={10} c="#666"><rect x="1" y="3" width="6" height="6" /><path d="M3 3V1h6v6H7" /></Ic></WinBtn>
              <WinBtn><Ic w={10} h={10} c="#666"><path d="M1.500 1.500l7 7M8.500 1.500l-7 7" /></Ic></WinBtn>
            </WinBtns>
          </TitleRow>
          <MenuRow>
            {["开始", "工程设置", "建模"].map(t => <MenuItem key={t}>{t}</MenuItem>)}
            <MenuItem $on>工程量</MenuItem>
            {["视图", "工具", "云应用", "施工算量", "造价协作", "协同建模(限免)"].map(t => <MenuItem key={t}>{t}</MenuItem>)}
            <SearchBox><span>土建计量GTJ中，图纸定位错了，如何重新定位?</span><Mag s={12} /></SearchBox>
            <UserBox>
              <Avatar><Ic w={12} h={14} c="none"><circle cx="6" cy="5" r="3" fill="#fff" stroke="none" /><path d="M1 14c0-4 10-4 10 0Z" fill="#fff" stroke="none" /></Ic></Avatar>
              张建军33
            </UserBox>
            <RightIcons>
              <Ic w={17} h={16} c="#666"><path d="M8 2c4 0 7 2.500 7 6s-3 6-7 6l-3 1.500.5-2.500C3 12 1 10 1 8c0-3.500 3-6 7-6Z" /><path d="M5 8.500h.5M8 8.500h.5M11 8.500h.5" /><circle cx="13.500" cy="3" r="2" stroke={B} /></Ic>
              <Ic w={12} h={14} c="#666"><path d="M2 4.500C2 1 9 1 9 4.500 9 7 5.500 7 5.500 10M5.500 12.500v.5" /><path d="M9 9.500h3l-1.500 2Z" fill="#666" stroke="none" /></Ic>
              <Ic w={16} h={15} c="#666"><path d="M5 1.500L1 4l1.500 3L4 6.500V14h8V6.500L13.500 7 15 4l-4-2.500c-1 2-5 2-6 0Z" /></Ic>
              <Ic w={14} h={14} c="#555"><path d="M1.500 10L7 4l5.500 6" /></Ic>
            </RightIcons>
          </MenuRow>
        </HeaderRows>
      </Header>

      <Ribbon>
        <Group $w={210}>
          <GroupBody>
            <SelectBig>
              <Ic w={18} h={28} vb="0 0 18 28" c={B} sw={1.600}><path d="M-6 2l22 18H2L-6 24Z" fill="#cfe2fb" /></Ic>
              <SelectBigLabel>选择</SelectBigLabel>
            </SelectBig>
            <SmallCol $w={100}>
              <SmallBtn><Ic w={15} h={18}><path d="M2 17l7-8M6 7l4 4M9 3l3 3 2-2-1.500-3Z" fill={D} /><path d="M2 17l2-1" stroke={B} /></Ic>拾取构件</SmallBtn>
              <SmallBtn><Ic w={15} h={18}><rect x="1" y="4" width="9" height="11" rx="2" stroke={B} /><path d="M4 4V3h9a1 1 0 0 1 1 1v10h-4" /><path d="M5 13l2 2 3-3" stroke={B} /></Ic>批量选择</SmallBtn>
              <SmallBtn><Ic w={15} h={18}><path d="M12 10V4a1 1 0 0 0-1-1H2a1 1 0 0 0-1 1v11a1 1 0 0 0 1 1h5" /><path d="M3 7h7M3 10h2M3 13h2" /><path d="M8 9l6 4-6 4Z" fill={B} stroke={B} /></Ic>按属性选择<Caret $c="#999" /></SmallBtn>
            </SmallCol>
            <SmallCol $w={80}>
              <SmallBtn><Ic w={15} h={18}><path d="M14 8V3a1 1 0 0 0-1-1H2a1 1 0 0 0-1 1v12a1 1 0 0 0 1 1h6" /><path d="M4 6h7M4 9h3M4 12h3" /><circle cx="11" cy="12" r="2.500" stroke={B} /></Ic>查找图元</SmallBtn>
              <SmallBtn><Ic w={15} h={18}><path d="M1 2h12L8 8v8l-2-2V8Z" /><path d="M10 11h4M10 13.500h4M10 16h4" stroke={B} /></Ic>过滤图元</SmallBtn>
            </SmallCol>
          </GroupBody>
          <GroupLabel $pr={16}>选择</GroupLabel>
        </Group>
        <Group $w={198}>
          <GroupBody $pl={5}>
            <Big $w={50}><IconSlot><CloudSigma /></IconSlot>云汇总</Big>
            <Big $w={50}><IconSlot><BoxSigma /></IconSlot>汇总计算</Big>
            <Big $w={90}><IconSlot><SelSigma /></IconSlot>汇总选中图元</Big>
          </GroupBody>
          <GroupLabel>汇总</GroupLabel>
        </Group>
        <Group $w={152}>
          <GroupBody $pl={6}>
            <Big $w={70} $off><IconSlot><GrayCalc /></IconSlot>查看计算式</Big>
            <Big $w={70} $off><IconSlot><GrayTable /></IconSlot>查看工程量</Big>
          </GroupBody>
          <GroupLabel>土建计算结果</GroupLabel>
        </Group>
        <Group $w={198}>
          <GroupBody $pl={5}>
            <Big $w={72}><IconSlot><RebarQty /></IconSlot>查看钢筋量</Big>
            <Big $w={56} $on><IconSlot><EditRebar /></IconSlot>编辑钢筋</Big>
            <Big $w={56} $on><IconSlot><Rebar3D /></IconSlot>钢筋三维</Big>
          </GroupBody>
          <GroupLabel>钢筋计算结果</GroupLabel>
        </Group>
        <Group $w={282}>
          <GroupBody $pl={11}>
            <Big $w={84} $off><IconSlot><GrayRebar3D /></IconSlot>施工段钢筋三维</Big>
            <Big $w={80} $off><IconSlot><GrayFx /></IconSlot>施工段提量</Big>
            <Big $w={96} $off><IconSlot><GrayMulti /></IconSlot>施工段多区域提量</Big>
          </GroupBody>
          <GroupLabel>施工段计算结果</GroupLabel>
        </Group>
        <Group $w={82}>
          <GroupBody><Big $w={82}><IconSlot><CheckBig /></IconSlot>合法性检查</Big></GroupBody>
          <GroupLabel>检查</GroupLabel>
        </Group>
        <Group $w={70}>
          <GroupBody><Big $w={70}><IconSlot><Report /></IconSlot>查看报表</Big></GroupBody>
          <GroupLabel>报表</GroupLabel>
        </Group>
        <Group $w={58}>
          <GroupBody><Big $w={58}><IconSlot><CloudIdx /></IconSlot>云指标</Big></GroupBody>
          <GroupLabel>指标</GroupLabel>
        </Group>
        <Group $w={78}>
          <GroupBody><Big $w={72}><IconSlot><TableEdit /></IconSlot>表格算量</Big></GroupBody>
          <GroupLabel>表格算量</GroupLabel>
        </Group>
      </Ribbon>

      <SelectRow>
        <Select $first><SelectText $cut>楼层</SelectText><Caret /></Select>
        <Select><SelectText>板</SelectText><Caret /></Select>
        <Select><SelectText>板受力筋</SelectText><Caret /></Select>
        <Select><SelectText>C8-200</SelectText><Caret /></Select>
        <Select><SelectText>分层板1</SelectText><Caret /></Select>
      </SelectRow>

      <Main>
        <LeftPanel>
          <Cap><X /></Cap>
          <CutTitle>导航栏</CutTitle>
          <NavTools>
            <ToolToggle><Ic w={16} h={14} c={B}><path d="M1 2.500h1M1 7h1M1 11.500h1" strokeWidth={2} /><path d="M5 2.500h10M5 7h10M5 11.500h10" /></Ic></ToolToggle>
            <ToolToggle><Ic w={16} h={16} c={B}><rect x="1" y="1.500" width="14" height="13" rx="1.500" /><path d="M3.500 5.500h1M6 5.500h6M3.500 8.500h1M6 8.500h6M3.500 11.500h1M6 11.500h3" /></Ic></ToolToggle>
          </NavTools>
          <NavBody>
            <NavList>
              <GroupRow t="施工段" dot />
              <GroupRow t="轴线" />
              <GroupRow t="柱" />
              <Item k="col" t="柱(Z)" />
              <Item k="gz" t="构造柱(Z)" />
              <Item k="qt" t="砌体柱(Z)" />
              <Item k="yb" t="约束边缘非阴影区(Z)" />
              <GroupRow t="墙" />
              <GroupRow t="门窗洞" />
              <GroupRow t="梁" />
              <Item k="beam" t="梁(L)" />
              <Item k="lian" t="连梁(G)" />
              <Item k="quan" t="圈梁(E)" />
              <GroupRow t="板" />
              <Item k="ban" t="现浇板(B)" />
              <Item k="luo" t="螺旋板(B)" />
              <Item k="po" t="坡道(PD)" />
              <Item k="mao" t="柱帽(V)" />
              <Item k="dong" t="板洞(N)" />
              <Item k="sl" t="板受力筋(S)" on />
              <Item k="fj" t="板负筋(F)" />
              <Item k="ld" t="楼层板带(H)" />
              <Item k="jy" t="板加腋(B)" />
              <GroupRow t="装配式" dot />
              <GroupRow t="空心楼盖" />
              <GroupRow t="楼梯" dot />
              <GroupRow t="装修" />
              <GroupRow t="基坑支护" dot />
            </NavList>
            <ScrollTrack><ScrollThumb /></ScrollTrack>
          </NavBody>
        </LeftPanel>

        <MiddleCol>
          <SidePanel $h={370}>
            <Cap><X /></Cap>
            <TabBar><Tab $on>构件列表</Tab><Tab>图纸管理</Tab></TabBar>
            <PanelTools>
              <ToolBtn $mr={13}><NewDoc />新建<Caret $c="#999" /></ToolBtn>
              <ToolBtn $mr={14}><CopyGlyph />复制</ToolBtn>
              <ToolBtn $mr={10}><Trash />删除</ToolBtn>
              <ToolBtn $mr={0}><CopyGlyph />层间复制</ToolBtn>
              <MoreBtn>▸▸</MoreBtn>
            </PanelTools>
            <SearchRow><span>搜索构件...</span><Mag s={12} /></SearchRow>
            <Tree>
              <TreeRoot><Caret $c="#888" />板受力筋</TreeRoot>
              <TreeChip>C8-200&nbsp;&nbsp;&lt;4&gt;</TreeChip>
            </Tree>
          </SidePanel>
          <SidePanel>
            <Cap $top={1}><X /></Cap>
            <TabBar><Tab $on>属性列表</Tab><Tab>图层管理</Tab></TabBar>
            <PropArea>
              <PropTable>
                <colgroup><col width={22} /><col width={101} /><col width={178} /></colgroup>
                <thead><tr><PropHead /><PropHead>属性名称</PropHead><PropHead $on>属性值</PropHead></tr></thead>
                <tbody>
                  <tr><PropNo $on>1</PropNo><PropCell $link>名称</PropCell><PropCell $edit>C8-200</PropCell></tr>
                  <tr><PropNo>2</PropNo><PropCell>类别</PropCell><PropCell>底筋</PropCell></tr>
                  <tr><PropNo>3</PropNo><PropCell $link>钢筋信息</PropCell><PropCell>&nbsp;<GradeMark>中</GradeMark>8@200</PropCell></tr>
                  <tr><PropNo>4</PropNo><PropCell>左弯折(mm)</PropCell><PropCell>(0)</PropCell></tr>
                  <tr><PropNo>5</PropNo><PropCell>右弯折(mm)</PropCell><PropCell>(0)</PropCell></tr>
                  <tr><PropNo>6</PropNo><PropCell>备注</PropCell><PropCell /></tr>
                  <tr><PropNo>7</PropNo><PropCell><Expand>+</Expand>钢筋业务属性</PropCell><PropCell /></tr>
                  <tr><PropNo>16</PropNo><PropCell><Expand>+</Expand>显示样式</PropCell><PropCell /></tr>
                </tbody>
              </PropTable>
            </PropArea>
          </SidePanel>
        </MiddleCol>

        <CenterCol>
          <ViewRow>
            <Strip><StripHandle /></Strip>
            <Viewport>
              <Scene />
              <ControlPanel>
                <ControlTitle>钢筋显示控制面板</ControlTitle>
                <ControlBox>
                  <ControlRow><BlueCheck><Tick /></BlueCheck>底筋</ControlRow>
                  <ControlRow><BlueCheck><Tick /></BlueCheck>显示其它图元</ControlRow>
                  <ControlRow><BlueCheck><Tick /></BlueCheck>显示详细公式</ControlRow>
                </ControlBox>
              </ControlPanel>
              <StatusBar>
                <Ic w={16} h={16} c="#fff"><path d="M10 1v5h5M10 6l5-5M6 15v-5H1M6 10l-5 5" /></Ic>
                请选择图元
              </StatusBar>
              <BottomWhite />
              <BottomHandle />
              <ViewTools>
                <Ic w={24} h={20} sw={1.100}><ellipse cx="12" cy="10" rx="8" ry="8" /><path d="M2 16C6 8 14 3 22 3c-2 7-10 13-20 13Z" stroke={B} /></Ic>
                <ViewToolGap $h={12} />
                <Ic w={20} h={20}><rect x="1" y="2" width="18" height="17" rx="1.500" /><text x="4" y="15" fontSize="8" fontWeight="700" fill={B} stroke="none" fontFamily="Liberation Sans, sans-serif">2D</text></Ic>
                <ViewToolGap $h={8} />
                <Cube />
                <ViewToolGap $h={9} />
                <Caret $c="#555" />
                <ViewToolGap $h={7} />
                <Cube filled />
                <ViewToolGap $h={8} />
                <Caret $c="#555" />
                <ViewToolGap $h={8} />
                <Ic w={20} h={20}><path d="M1 6V2.500A1.500 1.500 0 0 1 2.500 1H6M14 1h3.500A1.500 1.500 0 0 1 19 2.500V6M19 14v3.500a1.500 1.500 0 0 1-1.500 1.500H14M6 19H2.500A1.500 1.500 0 0 1 1 17.500V14" /></Ic>
                <ViewToolGap $h={9} />
                <Ic w={20} h={20}><rect x="1" y="1" width="18" height="18" rx="2" strokeDasharray="2 2" /><path d="M10 4l5 3v6l-5 3-5-3V7Zm0 6l5-3M10 10v6M10 10L5 7" stroke={B} /></Ic>
                <ViewToolLine />
                <Ic w={20} h={24}><path d="M19 13V3a1.500 1.500 0 0 0-1.500-1.500h-15A1.500 1.500 0 0 0 1 3v19h11" /><path d="M5 7h10M5 11h7M5 15h4" /><circle cx="16" cy="19" r="3.500" stroke={B} fill="#cfe2fb" /></Ic>
              </ViewTools>
            </Viewport>
            <Strip><StripHandle /></Strip>
          </ViewRow>
          <EditPanel>
            <EditCap $top={0}><X /></EditCap>
            <EditTitle>编辑钢筋</EditTitle>
            <EditTools>
              <NavArrows>
                <ArrowCell><Ic w={12} h={16} c={B}><path d="M2 1v14M10 2L4 8l6 6Z" /></Ic></ArrowCell>
                <ArrowCell><Ic w={12} h={16} c={B}><path d="M9 2L3 8l6 6Z" /></Ic></ArrowCell>
                <ArrowCell><Ic w={12} h={16} c={B}><path d="M3 2l6 6-6 6Z" /></Ic></ArrowCell>
                <ArrowCell><Ic w={12} h={16} c={B}><path d="M10 1v14M2 2l6 6-6 6Z" /></Ic></ArrowCell>
              </NavArrows>
              <BoxBtn><Ic w={16} h={18}><rect x="1" y="1.500" width="14" height="15" rx="1.500" /><path d="M8 13V5M5 8l3-3 3 3" stroke={B} /></Ic></BoxBtn>
              <BoxBtn $w={28}><Ic w={16} h={18} c="#bbb"><rect x="1" y="1.500" width="14" height="15" rx="1.500" /><path d="M8 5v8M5 10l3 3 3-3" /></Ic></BoxBtn>
              <EditTool $w={58}><EIco><rect x="1" y="3" width="9" height="4" /><path d="M1 7v4h8M10 9h5M13 7l2 2-2 2" stroke={D} /></EIco>插入</EditTool>
              <EditTool $w={54}><Trash />删除</EditTool>
              <EditTool $w={80}><EIco><path d="M1 1v13h14M4 4v8M7 7v5M10 5v7M13 8v4" /><path d="M1 15h14" stroke={B} /></EIco>缩尺配筋</EditTool>
              <EditTool $w={78}><EIco><rect x="1" y="2" width="14" height="12" rx="1.500" /><path d="M3 6h6M3 9h4M3 12h3" /><circle cx="12" cy="11" r="2.500" stroke={B} /></EIco>钢筋信息</EditTool>
              <EditTool $w={82}><EIco><rect x="1.500" y="1.500" width="13" height="13" rx="1.500" /><path d="M4 5h4v3H4v3h8V8H9" /></EIco>钢筋图库</EditTool>
              <EditTool $w={45}>其他<Caret $c="#aaa" /></EditTool>
              <span>单构件钢筋总重(kg)：641.245</span>
            </EditTools>
            <GridArea>
              <Grid>
                <colgroup>{rebarCols.map((w, i) => <col key={i} width={w} />)}</colgroup>
                <thead>
                  <tr>
                    <GH />
                    {rebarHead.map((t, i) => <GH key={t} $on={i === 0}>{t}</GH>)}
                  </tr>
                </thead>
                <tbody>
                  <tr>
                    <GNo>1</GNo>
                    <GC $row $mono>C8-200.1</GC><GC $row $mono>8</GC>
                    <GC $row><GradeMark>中</GradeMark></GC><GC $row $mono>1</GC>
                    <GC $row><ShapeCell><ShapeNum>14770</ShapeNum><ShapeLine /></ShapeCell></GC>
                    <GC $row $mono>14800-15-15</GC><GC $row>净长</GC><GC $row $mono>14770</GC><GC $row $mono>1</GC><GC $row $mono>392</GC><GC $row $mono>0</GC><GC $row $mono>5.989</GC><GC $row $mono>5.989</GC><GC $row>直筋</GC>
                  </tr>
                  <tr>
                    <GNo $on>2</GNo>
                    <GC $row $sel>C8-200.2</GC><GC $row $mono>8</GC>
                    <GC $row><GradeMark>中</GradeMark></GC><GC $row $mono>1</GC>
                    <GC $row><ShapeCell><ShapeNum>14500</ShapeNum><ShapeLine /></ShapeCell></GC>
                    <GC $row $mono>14200+max(300/2,5*d)+max(300/2,5*d)</GC><GC $row>净长+设定<br />锚固+…</GC><GC $row $mono>14500</GC><GC $row $mono>108</GC><GC $row $mono>392</GC><GC $row $mono>0</GC><GC $row $mono>5.882</GC><GC $row $mono>635.256</GC><GC $row>直筋</GC>
                  </tr>
                  <tr>
                    <GNo>3</GNo>
                    {rebarHead.map(t => <GC key={t} $h={21} />)}
                  </tr>
                </tbody>
              </Grid>
            </GridArea>
            <HBar>
              <ArrowLeft $c="#666" />
              <HTrack><HThumb /></HTrack>
              <ArrowRight $c="#666" />
            </HBar>
          </EditPanel>
        </CenterCol>

        <RightPanel>
          <Cap><X /></Cap>
          <CapTitle>显示设置</CapTitle>
          <DisplayTabs><DTab>图元显示</DTab><DTab $on>楼层显示</DTab></DisplayTabs>
          <RadioRow>
            <RadioItem><Radio><RadioDot /></Radio>当前楼层</RadioItem>
            <RadioItem><Radio />相邻楼层</RadioItem>
            <RadioItem><Radio />全部楼层</RadioItem>
          </RadioRow>
          <FloorBox>
            <FloorRow><TreeCaret><Caret $c="#888" /></TreeCaret><FloorCheck $partial><FloorInner /></FloorCheck>全部楼层</FloorRow>
            <FloorRow $indent><FloorCheck />屋面层</FloorRow>
            <FloorRow $indent><FloorCheck><Tick c="#aaa" /></FloorCheck>首层</FloorRow>
            <FloorRow $indent><FloorCheck />基础层</FloorRow>
          </FloorBox>
          <FootRow><PlainCheck />其他区域图元亮显</FootRow>
        </RightPanel>
      </Main>

      <Net>
        <NetPill>
          <NetRow><Ic w={8} h={8} c="#38a8f0" sw={1.600}><path d="M4 7V1.500M1 4l3-3 3 3" /></Ic><NetVal><b>0</b>K/s</NetVal></NetRow>
          <NetRow><Ic w={8} h={8} c="#28b828" sw={1.600}><path d="M4 1v5.500M1 4l3 3 3-3" /></Ic><NetVal><b>0</b>K/s</NetVal></NetRow>
        </NetPill>
        <NetCircle>
          67<NetPct>%</NetPct>
          <NetRing width={60} height={60} viewBox="0 0 60 60" fill="none"><path d="M30 5A25 25 0 0 1 50 46" stroke="#5fdcc0" strokeWidth={1.800} /><path d="M10 46l4 5" stroke="#e0a030" strokeWidth={1.800} /></NetRing>
        </NetCircle>
      </Net>
    </Page>
  );
}
